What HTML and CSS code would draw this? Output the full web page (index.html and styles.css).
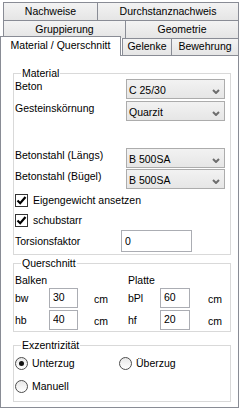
FILE: index.html
```html
<!DOCTYPE html>
<html lang="de">
<head>
  <meta charset="UTF-8" />
  <meta name="viewport" content="width=device-width, initial-scale=1.0"/>
  <title>Material / Querschnitt</title>
  <link rel="stylesheet" href="styles.css">
</head>
<body>

  <div class="tabs">
    <div class="tab-row">
      <div class="tab tab-nachweise">Nachweise</div>
      <div class="tab tab-durchstanz">Durchstanznachweis</div>
    </div>
    <div class="tab-row">
      <div class="tab tab-gruppierung">Gruppierung</div>
      <div class="tab tab-geometrie">Geometrie</div>
    </div>
    <div class="tab-row tab-row-front">
      <div class="tab tab-active">Material / Querschnitt</div>
      <div class="tab tab-side tab-gelenke">Gelenke</div>
      <div class="tab tab-side tab-bewehrung">Bewehrung</div>
    </div>
  </div>

  <div class="panel">

    <fieldset class="group group-material">
      <legend>Material</legend>
      <div class="row row-beton">
        <span class="lbl">Beton</span>
        <div class="select"><span>C 25/30</span><svg class="chev" width="8" height="5" viewBox="0 0 8 5"><polyline points="1,1 4,4 7,1" /></svg></div>
      </div>
      <div class="row row-gestein">
        <span class="lbl">Gesteinskörnung</span>
        <div class="select"><span>Quarzit</span><svg class="chev" width="8" height="5" viewBox="0 0 8 5"><polyline points="1,1 4,4 7,1" /></svg></div>
      </div>
      <div class="row row-laengs">
        <span class="lbl">Betonstahl (Längs)</span>
        <div class="select"><span>B 500SA</span><svg class="chev" width="8" height="5" viewBox="0 0 8 5"><polyline points="1,1 4,4 7,1" /></svg></div>
      </div>
      <div class="row row-buegel">
        <span class="lbl">Betonstahl (Bügel)</span>
        <div class="select"><span>B 500SA</span><svg class="chev" width="8" height="5" viewBox="0 0 8 5"><polyline points="1,1 4,4 7,1" /></svg></div>
      </div>
      <div class="check row-eigen">
        <span class="box"><svg width="11" height="11" viewBox="0 0 11 11"><polyline points="1.5,5.5 4.2,8.2 9.5,2" /></svg></span>
        <span>Eigengewicht ansetzen</span>
      </div>
      <div class="check row-schub">
        <span class="box"><svg width="11" height="11" viewBox="0 0 11 11"><polyline points="1.5,5.5 4.2,8.2 9.5,2" /></svg></span>
        <span>schubstarr</span>
      </div>
      <div class="row row-torsion">
        <span class="lbl lbl-torsion">Torsionsfaktor</span>
        <input class="field field-torsion" type="text" value="0">
      </div>
    </fieldset>

    <fieldset class="group group-querschnitt">
      <legend>Querschnitt</legend>
      <div class="dims">
        <span class="head">Balken</span>
        <span class="head head-platte">Platte</span>

        <span class="dim-lbl">bw</span>
        <input class="field" type="text" value="30">
        <span class="unit">cm</span>
        <span class="dim-lbl">bPl</span>
        <input class="field" type="text" value="60">
        <span class="unit unit-right">cm</span>

        <span class="dim-lbl">hb</span>
        <input class="field" type="text" value="40">
        <span class="unit">cm</span>
        <span class="dim-lbl">hf</span>
        <input class="field" type="text" value="20">
        <span class="unit unit-right">cm</span>
      </div>
    </fieldset>

    <fieldset class="group group-exz">
      <legend>Exzentrizität</legend>
      <div class="radios">
        <div class="radio"><span class="dot dot-on"></span><span>Unterzug</span></div>
        <div class="radio radio-ueber"><span class="dot"></span><span>Überzug</span></div>
      </div>
      <div class="radios radios-second">
        <div class="radio"><span class="dot"></span><span>Manuell</span></div>
      </div>
    </fieldset>

  </div>

</body>
</html>
```

FILE: styles.css
```css
body {
  margin: 0;
  font-family: "Liberation Sans", Arial, sans-serif;
  font-size: 10.5px;
  line-height: 13px;
  color: #000;
  background: #fff;
}

/* Reiter */
.tabs {
  padding-top: 2px;
}

.tab-row {
  display: flex;
  margin-left: 3px;
}

.tab {
  box-sizing: border-box;
  height: 18px;
  padding-top: 2px;
  border: 1px solid #898c95;
  border-bottom: none;
  background: linear-gradient(#f3f3f3, #e5e5e5);
  text-align: center;
  white-space: nowrap;
}

.tab + .tab {
  margin-left: -1px;
}

.tab-nachweise   { width: 95px; }
.tab-durchstanz  { width: 142px; }
.tab-gruppierung { width: 123px; }
.tab-geometrie   { width: 114px; }

.tab-row-front {
  margin-left: 0;
  margin-top: -2px;
  height: 19px;
  align-items: flex-start;
}

.tab-active {
  position: relative;
  z-index: 1;
  width: 121px;
  height: 20px;
  background: #fff;
}

.tab-side {
  margin-top: 2px;
  height: 17px;
  padding-top: 1px;
}

.tab-row-front .tab-gelenke {
  width: 50px;
  margin-left: 1px;
}

.tab-bewehrung {
  width: 68px;
}

/* Inhalt */
.panel {
  box-sizing: border-box;
  width: 239px;
  height: 353px;
  border: 1px solid #898c95;
  padding: 11px 0 0 12px;
  background: #fff;
}

.group {
  box-sizing: border-box;
  width: 218px;
  margin: 0;
  padding: 0 1px 2px 1px;
  border: 1px solid #d9d9d9;
}

.group legend {
  margin-left: 6px;
  padding: 0 1px;
  line-height: 13px;
}

.row {
  display: flex;
  align-items: flex-start;
  height: 20px;
}

.lbl {
  width: 111px;
  padding-top: 1px;
}

.row-beton   { margin-top: -1px; }
.row-gestein { margin-top: 2px; }
.row-laengs  { margin-top: 27px; }
.row-buegel  { margin-top: 1px; }

.select {
  box-sizing: border-box;
  display: flex;
  justify-content: space-between;
  align-items: center;
  width: 99px;
  height: 20px;
  padding: 3px 4px 0 2px;
  border: 1px solid #acacac;
  background: linear-gradient(#f2f2f2, #e6e6e6);
}

.chev {
  margin-top: 1px;
}

.chev polyline {
  fill: none;
  stroke: #6d6d6d;
  stroke-width: 2;
}

.check {
  display: flex;
  align-items: center;
  height: 13px;
}

.row-eigen { margin-top: 5px; }
.row-schub { margin-top: 7px; }

.box {
  box-sizing: border-box;
  width: 13px;
  height: 13px;
  margin-right: 5px;
  border: 1px solid #333;
  background: #fff;
}

.box svg {
  display: block;
}

.box polyline {
  fill: none;
  stroke: #000;
  stroke-width: 2.2;
}

.row-torsion {
  margin-top: 3px;
  height: 22px;
  align-items: center;
}

.lbl-torsion {
  width: 106px;
  padding-top: 0;
}

.field {
  box-sizing: border-box;
  width: 29px;
  height: 20px;
  margin: 0;
  padding: 0 3px 2px 3px;
  border: 1px solid #abadb3;
  font: inherit;
  color: #000;
  background: #fff;
}

.field-torsion {
  width: 71px;
  height: 22px;
  padding-bottom: 0;
}

/* Querschnitt */
.group-querschnitt {
  margin-top: 2px;
}

.dims {
  display: grid;
  grid-template-columns: 34px 29px 50px 32px 30px 1fr;
  grid-template-rows: 13px 20px 20px;
  row-gap: 1px;
  align-items: center;
  margin-top: 4px;
}

.dims .field:nth-of-type(n) {
  width: 100%;
}

.head {
  grid-column: 1 / 4;
}

.head-platte {
  grid-column: 4 / 7;
}

.dim-lbl {
  padding-top: 1px;
}

.unit {
  padding: 3px 0 0 16px;
}

.unit-right {
  padding-left: 18px;
}

.dims > :nth-child(n+9) {
  margin-top: 1px;
}

/* Exzentrizität */
.group-exz {
  margin-top: 7px;
  padding-bottom: 8px;
}

.radios {
  display: flex;
  margin-top: 5px;
}

.radios-second {
  margin-top: 10px;
}

.radio {
  display: flex;
  align-items: center;
  width: 104px;
  height: 13px;
}

.radio-ueber {
  width: auto;
}

.dot {
  box-sizing: border-box;
  display: flex;
  align-items: center;
  justify-content: center;
  width: 13px;
  height: 13px;
  margin-right: 4px;
  border: 1px solid #4d4d4d;
  border-radius: 50%;
  background: linear-gradient(#e8e8e8, #fff);
}

.dot-on::after {
  content: "";
  width: 5px;
  height: 5px;
  border-radius: 50%;
  background: #111;
}
```
